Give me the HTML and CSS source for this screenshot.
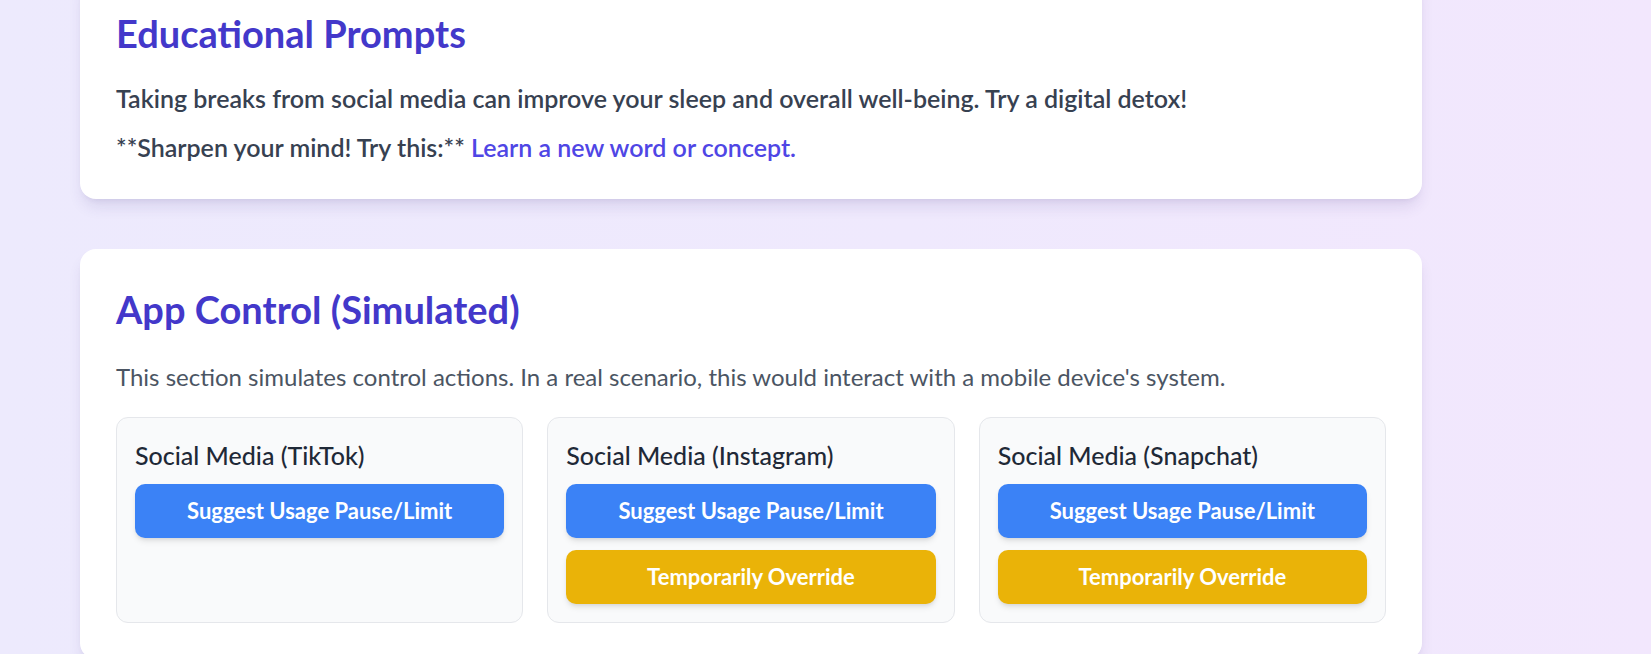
FILE: index.html
```html
<!DOCTYPE html>
<html lang="en">
<head>
<meta charset="utf-8">
<title>Digital Wellbeing</title>
<link rel="stylesheet" href="styles.css">
</head>
<body>
<main class="page">
  <section class="card card-edu">
    <h2 class="card-title">Educational Prompts</h2>
    <p class="tip">Taking breaks from social media can improve your sleep and overall well-being. Try a digital detox!</p>
    <p class="tip">**Sharpen your mind! Try this:** <a class="tip-link" href="#">Learn a new word or concept.</a></p>
  </section>

  <section class="card card-control">
    <h2 class="card-title">App Control (Simulated)</h2>
    <p class="desc">This section simulates control actions. In a real scenario, this would interact with a mobile device's system.</p>
    <div class="apps">
      <div class="app">
        <h3 class="app-name">Social Media (TikTok)</h3>
        <button class="btn btn-pause" type="button">Suggest Usage Pause/Limit</button>
      </div>
      <div class="app">
        <h3 class="app-name">Social Media (Instagram)</h3>
        <button class="btn btn-pause" type="button">Suggest Usage Pause/Limit</button>
        <button class="btn btn-override" type="button">Temporarily Override</button>
      </div>
      <div class="app">
        <h3 class="app-name">Social Media (Snapchat)</h3>
        <button class="btn btn-pause" type="button">Suggest Usage Pause/Limit</button>
        <button class="btn btn-override" type="button">Temporarily Override</button>
      </div>
    </div>
  </section>
</main>
</body>
</html>
```
FILE: styles.css
```css
html, body {
  margin: 0;
  padding: 0;
  overflow: hidden;
}

body {
  min-height: 654px;
  background: linear-gradient(to right, #edeafd 0%, #efe9fd 55%, #f2e7fd 100%);
  font-family: "Lato", "Open Sans", sans-serif;
  color: #374151;
}

.page {
  width: 1342px;
  margin: -27px 0 0 80px;
}

.card {
  background: #ffffff;
  border-radius: 16px;
  padding: 36px;
  box-shadow: 0 10px 15px -3px rgba(60, 40, 120, 0.12), 0 4px 6px -4px rgba(60, 40, 120, 0.1);
}

.card-edu {
  padding-bottom: 34px;
  margin-bottom: 50px;
}

.card-title {
  margin: 0;
  font-size: 38px;
  line-height: 48px;
  font-weight: 700;
  color: #4338ca;
}

.card-edu .card-title {
  margin-bottom: 23px;
}

.tip {
  margin: 0;
  font-size: 25px;
  line-height: 36px;
  font-weight: 600;
  color: #374151;
}

.tip + .tip {
  margin-top: 13px;
}

.tip-link {
  color: #4f46e5;
  text-decoration: none;
}

.desc {
  margin: 27px 0 0;
  font-size: 24px;
  line-height: 34px;
  font-weight: 400;
  color: #4b5563;
}

.apps {
  margin-top: 23px;
  display: grid;
  grid-template-columns: repeat(3, 1fr);
  gap: 24px;
}

.app {
  background: #f9fafb;
  border: 1px solid #e5e7eb;
  border-radius: 12px;
  padding: 18px;
  display: flex;
  flex-direction: column;
}

.app-name {
  margin: 0 0 10px;
  font-size: 25px;
  line-height: 38px;
  font-weight: 500;
  color: #1f2937;
}

.btn {
  display: block;
  width: 100%;
  height: 54px;
  padding: 0 12px;
  border: 0;
  border-radius: 10px;
  color: #ffffff;
  font-family: "Lato", "Open Sans", sans-serif;
  font-size: 22px;
  line-height: 30px;
  font-weight: 700;
  cursor: pointer;
  box-shadow: 0 4px 6px -1px rgba(0, 0, 0, 0.1), 0 2px 4px -2px rgba(0, 0, 0, 0.1);
}

.btn + .btn {
  margin-top: 12px;
}

.btn-pause {
  background: #3b82f6;
}

.btn-override {
  background: #eab308;
}
```
